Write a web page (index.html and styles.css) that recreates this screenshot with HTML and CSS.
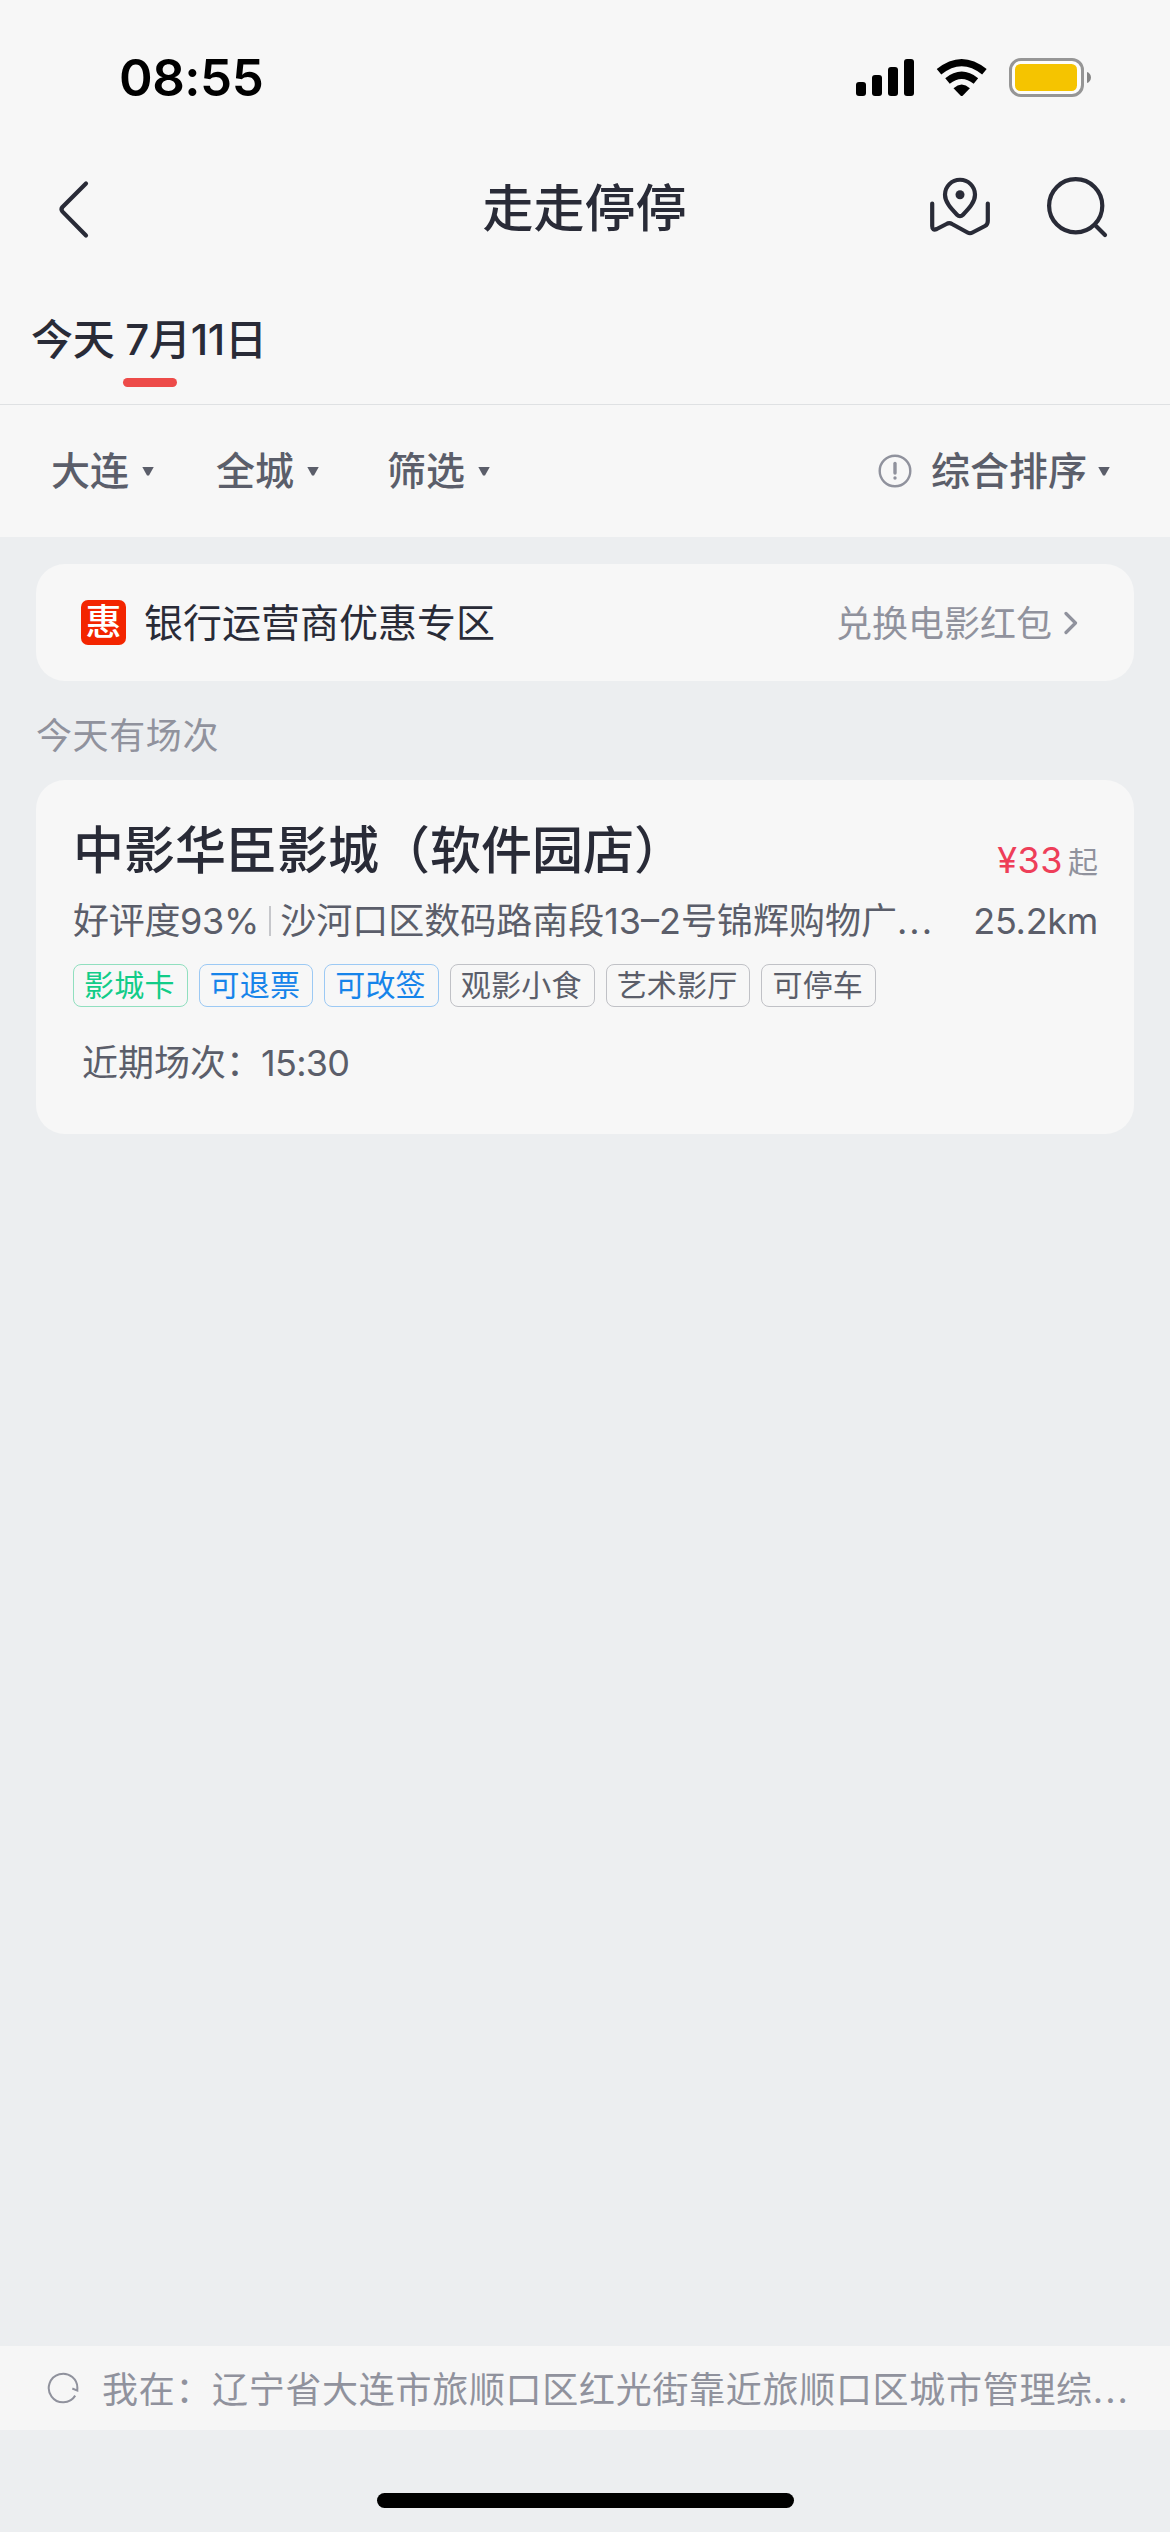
FILE: index.html
```html
<!DOCTYPE html>
<html lang="zh-CN">
<head>
<meta charset="utf-8">
<title>走走停停</title>
<link rel="stylesheet" href="styles.css">
</head>
<body>
<div class="app">
  <div class="status">
    <span class="clock">08:55</span>
    <svg class="status-icons" width="238" height="42" viewBox="854 57 238 42">
      <rect x="856" y="82" width="10" height="14" rx="3"/>
      <rect x="872" y="75" width="10" height="21" rx="3"/>
      <rect x="888" y="67" width="10" height="29" rx="3"/>
      <rect x="904" y="59" width="10" height="37" rx="3"/>
      <g fill="none" stroke="#000" stroke-width="7.2">
        <path d="M939 71.8Q961.7 53.4 984.400 71.8"/>
        <path d="M947.500 81Q961.700 69.600 975.900 81"/>
      </g>
      <path d="M953.500 88.200Q961.700 80.800 969.900 88.200L962.900 95.600Q961.700 96.600 960.500 95.600Z"/>
      <rect x="1010.500" y="59.500" width="72" height="36" rx="10.500" fill="#fdfdfb" stroke="#969696" stroke-width="3"/>
      <rect x="1015" y="64" width="62" height="27" rx="5.500" fill="#f5c400"/>
      <path d="M1087 72C1092.300 73.500 1092.300 81.500 1087 83Z" fill="#858585"/>
    </svg>
  </div>

  <header class="navbar">
    <svg class="back" width="36" height="64" viewBox="56 177 36 64"><path d="M86 183.500L62.500 207Q60.500 209.300 62.500 211.600L86 235.500"/></svg>
    <h1>走走停停</h1>
    <div class="nav-actions">
      <svg width="64" height="64" viewBox="928 177 64 64">
        <path d="M960 216.200Q958.500 216.200 957 214.700C951 208.500 945 202.200 945 194.700A15 15 0 0 1 975 194.700C975 202.200 969 208.500 963 214.700Q961.500 216.200 960 216.200Z"/>
        <path d="M932.200 203.500V226Q932.200 231 936.800 229L946.500 224Q949.300 222.200 952 224L967.500 232.500Q970 234 972.500 232.500L985 226Q987.800 224.500 987.800 221V203.500"/>
        <circle class="dot" cx="960" cy="194.800" r="4.500"/>
      </svg>
      <svg width="64" height="64" viewBox="1045 177 64 64">
        <circle cx="1075.700" cy="205.700" r="26.600"/><path d="M1095.500 225.500L1105 235"/>
      </svg>
    </div>
  </header>

  <nav class="dates"><div class="date">今天 7月11日</div><i class="date-bar"></i></nav>

  <div class="filters">
    <div class="filter f1">大连<i class="caret"></i></div>
    <div class="filter f2">全城<i class="caret"></i></div>
    <div class="filter f3">筛选<i class="caret"></i></div>
    <div class="filter sort">
      <svg width="34" height="34" viewBox="0 0 34 34"><circle cx="17" cy="17" r="15.300"/><path d="M17 9.500V19"/><circle class="mark" cx="17" cy="24" r="1.700"/></svg>
      综合排序<i class="caret"></i>
    </div>
  </div>

  <main>
    <a class="promo">
      <span class="badge">惠</span>
      <span class="promo-name">银行运营商优惠专区</span>
      <span class="promo-more">兑换电影红包</span>
      <svg width="14" height="24" viewBox="0 0 14 24"><path d="M2 2.500L11.500 12L2 21.500"/></svg>
    </a>
    <h2>今天有场次</h2>
    <article class="cinema">
      <div class="cinema-head">
        <h3>中影华臣影城（软件园店）</h3>
        <div class="price">¥33<small>起</small></div>
      </div>
      <div class="info">
        <span class="rating">好评度93%</span><i class="divider"></i>
        <span class="address">沙河口区数码路南段13–2号锦辉购物广<span class="dots">...</span></span>
        <span class="distance">25.2km</span>
      </div>
      <div class="tags">
        <span class="tag green">影城卡</span><span class="tag blue">可退票</span><span class="tag blue">可改签</span><span class="tag">观影小食</span><span class="tag">艺术影厅</span><span class="tag">可停车</span>
      </div>
      <div class="recent"><span class="recent-label">近期场次：</span><span class="recent-time">15:30</span></div>
    </article>
  </main>

  <div class="location">
    <svg width="34" height="34" viewBox="46 2371 34 34"><path d="M75.200 2395.600A14.300 14.300 0 1 1 77.300 2389.500M72.300 2388.500L77.300 2390.600V2387"/></svg>
    <span class="location-label">我在：</span>
    <span class="location-text">辽宁省大连市旅顺口区红光街靠近旅顺口区城市管理综<span class="dots">...</span></span>
  </div>
  <footer class="home"><i></i></footer>
</div>
</body>
</html>
```

FILE: styles.css
```css
* { box-sizing: border-box; }
body { margin: 0; }
h1, h2, h3 { margin: 0; font-weight: 500; }
svg { flex: none; display: block; }
i { display: block; flex: none; }

.app {
  width: 1170px;
  height: 2532px;
  display: flex;
  flex-direction: column;
  overflow: hidden;
  background: #eceef0;
  color: #292b37;
  font-family: Inter, "Noto Sans CJK SC", sans-serif;
  font-size: 36px;
  white-space: nowrap;
}

.status {
  height: 156px;
  padding: 0 78px 0 119px;
  display: flex;
  align-items: center;
  justify-content: space-between;
  background: #f7f7f7;
  color: #000;
}
.clock { font-size: 51px; font-weight: 600; line-height: 60px; letter-spacing: -.5px; }

.navbar {
  height: 132px;
  padding: 0 61px 26px 56px;
  display: grid;
  grid-template-columns: 1fr auto 1fr;
  align-items: center;
  background: #f7f7f7;
}
.navbar svg { fill: none; stroke: #292b37; stroke-width: 4.2; stroke-linecap: round; stroke-linejoin: round; }
.navbar .dot { fill: #292b37; stroke: none; }
h1 { padding-left: 4px; font-size: 51px; line-height: 64px; }
.nav-actions { display: flex; gap: 53px; justify-content: flex-end; }

.dates {
  height: 117px;
  padding: 22px 31px 0;
  background: #f7f7f7;
  border-bottom: 1px solid #dfe1e3;
}
.date { font-size: 42px; line-height: 60px; font-weight: 500; letter-spacing: -.3px; }
.date-bar { width: 54px; height: 9px; margin: 8px 0 0 92px; border-radius: 5px; background: #ed4b49; }

.filters {
  height: 132px;
  padding: 0 60px 0 51px;
  display: flex;
  align-items: center;
  background: #f7f7f7;
  color: #5b5e6a;
  font-size: 39px;
  font-weight: 500;
}
.filter { display: flex; align-items: center; line-height: 60px; }
.f1 { width: 165px; }
.f2 { width: 171px; }
.sort { margin-left: auto; }
.caret { width: 12px; height: 9px; margin-left: 13px; background: #5b5e6a; clip-path: polygon(0 0, 100% 0, 58% 100%, 42% 100%); }
.sort .caret { margin-left: 11px; }
.sort svg { margin-right: 19px; fill: none; stroke: #90929d; stroke-width: 2.400; }
.sort path { stroke-width: 3.400; stroke-linecap: round; }
.sort .mark { fill: #90929d; stroke: none; }

main { flex: 1; padding: 27px 36px 0; }
.promo {
  height: 117px;
  padding: 0 56px 0 45px;
  display: flex;
  align-items: center;
  border-radius: 29px;
  background: #f7f7f7;
}
.badge {
  width: 45px;
  height: 45px;
  margin-right: 18px;
  border-radius: 7px;
  background: #f32500;
  color: #fff;
  font-size: 36px;
  line-height: 44px;
  font-weight: 500;
  text-align: center;
}
.promo-name { padding-bottom: 5px; font-size: 39px; }
.promo-more { padding-bottom: 4px; margin-left: auto; margin-right: 12px; color: #90929d; }
.promo svg { fill: none; stroke: #90929d; stroke-width: 3.200; stroke-linecap: round; stroke-linejoin: round; }
h2 { height: 99px; padding-top: 5px; font-size: 36px; line-height: 100px; font-weight: 400; color: #90929d; letter-spacing: .6px; }

.cinema { height: 354px; padding: 36px 36px 0 37px; border-radius: 29px; background: #f7f7f7; color: #5b5e6a; }
.cinema-head { height: 75px; display: flex; justify-content: space-between; }
h3 { font-size: 51px; line-height: 70px; font-weight: 500; color: #292b37; }
.price { padding-top: 10px; line-height: 68px; color: #ee3e59; letter-spacing: .5px; }
.price small { font-size: 30px; color: #90929d; margin-left: 5px; letter-spacing: 0; }
.info { height: 60px; display: flex; align-items: center; line-height: 60px; }
.rating { letter-spacing: -.3px; }
.divider { width: 2px; height: 30px; margin: 0 9px 0 10px; background: #c6c7cb; }
.distance { margin-left: auto; letter-spacing: -.3px; }
.dots { letter-spacing: 2px; }
.tags { display: flex; gap: 11px; margin-top: 13px; }
.tag { height: 43px; padding: 0 12px 0 10px; border: 1px solid #c0c1c6; border-radius: 8px; font-size: 30px; line-height: 41px; letter-spacing: .2px; }
.green { color: #11cc88; border-color: #90dfbf; }
.blue { color: #1684ea; border-color: #9cc9f4; }
.recent { margin: 26px 0 0 9px; display: flex; line-height: 60px; }
.recent-label { width: 179px; }
.recent-time { letter-spacing: -.7px; }

.location {
  height: 84px;
  padding: 0 36px 0 46px;
  display: flex;
  align-items: center;
  background: #f6f6f6;
  color: #90929d;
}
.location svg { margin-right: 22px; fill: none; stroke: #90929d; stroke-width: 2; }
.location-label { width: 110px; padding-bottom: 3px; letter-spacing: .7px; }
.location-text { padding-bottom: 3px; letter-spacing: .7px; }
.home { height: 102px; padding-top: 63px; }
.home i { width: 417px; height: 15px; margin: auto; border-radius: 8px; background: #000; }
```
